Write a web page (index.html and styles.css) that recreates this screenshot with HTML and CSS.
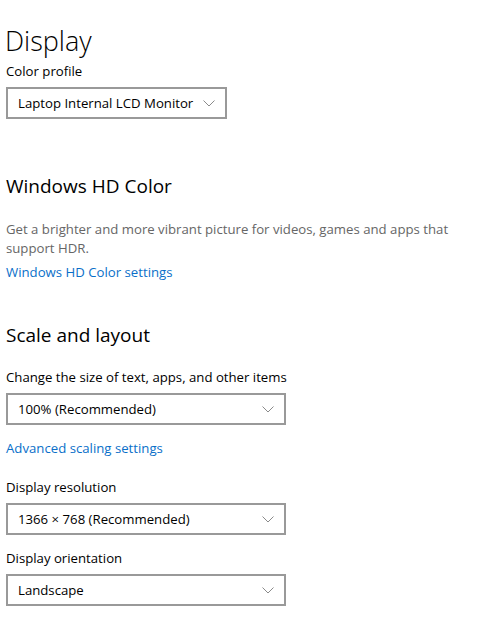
FILE: index.html
```html
<!DOCTYPE html>
<html lang="en">
<head>
  <meta charset="UTF-8">
  <title>Display</title>
  <link rel="stylesheet" href="styles.css">
</head>
<body>
  <div class="settings-page">
    <h1>Display</h1>
    <label class="field-label">Color profile</label>
    <div class="dropdown dropdown-auto">
      <span>Laptop Internal LCD Monitor</span>
      <svg class="chevron" width="12" height="7" viewBox="0 0 12 7"><path d="M0.5 0.5 L6 6 L11.5 0.5" fill="none" stroke="#8a8a8a" stroke-width="1"/></svg>
    </div>

    <section class="hd-color">
      <h2>Windows HD Color</h2>
      <p class="description">Get a brighter and more vibrant picture for videos, games and apps that support HDR.</p>
      <a href="#" class="link">Windows HD Color settings</a>
    </section>

    <section class="scale-layout">
      <h2>Scale and layout</h2>
      <label class="field-label">Change the size of text, apps, and other items</label>
      <div class="dropdown">
        <span>100% (Recommended)</span>
        <svg class="chevron" width="12" height="7" viewBox="0 0 12 7"><path d="M0.5 0.5 L6 6 L11.5 0.5" fill="none" stroke="#8a8a8a" stroke-width="1"/></svg>
      </div>
      <a href="#" class="link link-spaced">Advanced scaling settings</a>

      <label class="field-label">Display resolution</label>
      <div class="dropdown">
        <span>1366 × 768 (Recommended)</span>
        <svg class="chevron" width="12" height="7" viewBox="0 0 12 7"><path d="M0.5 0.5 L6 6 L11.5 0.5" fill="none" stroke="#8a8a8a" stroke-width="1"/></svg>
      </div>

      <label class="field-label">Display orientation</label>
      <div class="dropdown">
        <span>Landscape</span>
        <svg class="chevron" width="12" height="7" viewBox="0 0 12 7"><path d="M0.5 0.5 L6 6 L11.5 0.5" fill="none" stroke="#8a8a8a" stroke-width="1"/></svg>
      </div>
    </section>
  </div>
</body>
</html>
```

FILE: styles.css
```css
body {
  font-family: "Open Sans", "Noto Sans", sans-serif;
  margin: 0;
  padding: 0;
  background-color: #fff;
  color: #000;
}

.settings-page {
  padding: 23px 6px 0 6px;
  display: flex;
  flex-direction: column;
  align-items: flex-start;
}

h1 {
  font-size: 27px;
  font-weight: 300;
  margin: 0 0 0 -1px;
  line-height: 36px;
}

h2 {
  font-size: 19px;
  font-weight: 400;
  margin: 0;
  line-height: 26px;
}

.field-label {
  font-size: 13.2px;
  line-height: 18px;
  margin-top: 3px;
}

.dropdown {
  box-sizing: border-box;
  display: flex;
  align-items: center;
  justify-content: space-between;
  width: 280px;
  height: 32px;
  margin-top: 7px;
  padding: 0 10px 0 10px;
  border: 2px solid #999;
  font-size: 13.2px;
  white-space: nowrap;
}

.dropdown-auto {
  width: auto;
}

.dropdown .chevron {
  margin-left: 10px;
}

.hd-color {
  margin-top: 54px;
  display: flex;
  flex-direction: column;
  align-items: flex-start;
}

.description {
  font-size: 13.2px;
  line-height: 19px;
  color: #666;
  margin: 21px 0 0 0;
  max-width: 460px;
}

.link {
  font-size: 13.2px;
  line-height: 20px;
  color: #0a6fc9;
  text-decoration: none;
  margin-top: 4px;
}

.scale-layout {
  margin-top: 40px;
  display: flex;
  flex-direction: column;
  align-items: flex-start;
}

.scale-layout h2 {
  margin-bottom: 17px;
}

.link-spaced {
  margin-top: 13px;
  margin-bottom: 17px;
}

.scale-layout .dropdown + .field-label {
  margin-top: 14px;
}
```
